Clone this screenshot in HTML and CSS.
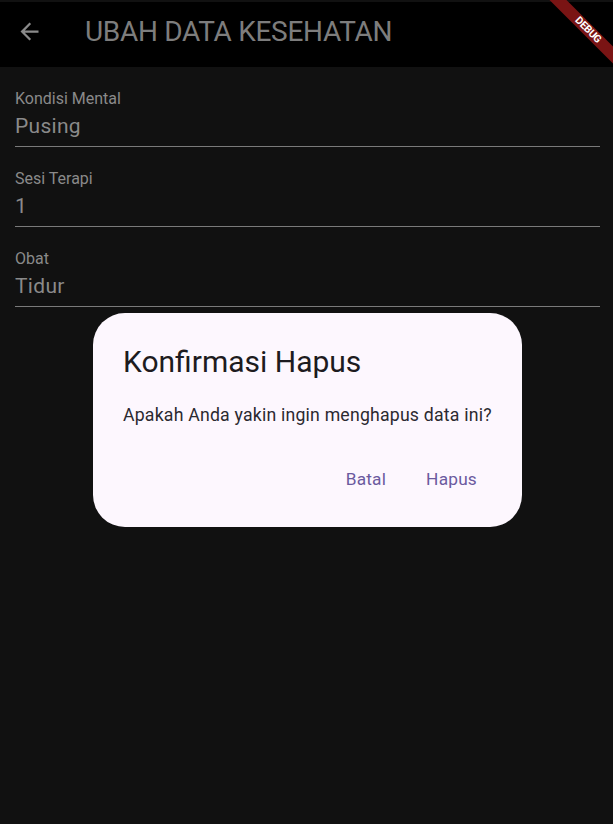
FILE: index.html
```html
<!DOCTYPE html>
<html>
<head>
<meta charset="utf-8">
<link rel="stylesheet" href="styles.css">
</head>
<body>
<div class="app">
  <header class="appbar">
    <svg class="back" viewBox="0 0 24 24" width="27" height="27"><path d="M20 11H7.83l5.59-5.59L12 4l-8 8 8 8 1.41-1.41L7.83 13H20v-2z" fill="currentColor"/></svg>
    <h1 class="title">UBAH DATA KESEHATAN</h1>
  </header>
  <main class="form">
    <div class="field"><div class="label">Kondisi Mental</div><div class="value">Pusing</div></div>
    <div class="field"><div class="label">Sesi Terapi</div><div class="value">1</div></div>
    <div class="field"><div class="label">Obat</div><div class="value">Tidur</div></div>
  </main>
  <div class="dialog">
    <h2 class="dlg-title">Konfirmasi Hapus</h2>
    <p class="dlg-content">Apakah Anda yakin ingin menghapus data ini?</p>
    <div class="actions">
      <button class="btn">Batal</button>
      <button class="btn">Hapus</button>
    </div>
  </div>
  <div class="banner"><span>DEBUG</span></div>
</div>
</body>
</html>
```
FILE: styles.css
```css
* { box-sizing: border-box; }
html, body { margin: 0; padding: 0; }
body {
  background: #111111;
  font-family: Roboto, "Noto Sans", sans-serif;
  width: 613px;
  height: 824px;
  overflow: hidden;
}
.app {
  position: relative;
  width: 613px;
  height: 824px;
  background: #111111;
  overflow: hidden;
}
.appbar {
  margin-top: 2px;
  height: 65px;
  background: #000;
  display: flex;
  align-items: center;
  padding-left: 16px;
  padding-bottom: 6px;
}
.back { color: #8a8a8a; display: block; }
.title {
  margin: 0 0 0 42px;
  font-weight: 400;
  font-size: 28px;
  letter-spacing: -0.3px;
  color: #7d7d7d;
}
.form {
  padding: 0 13px 0 15px;
  display: flex;
  flex-direction: column;
}
.field {
  height: 80px;
  padding-top: 22px;
  border-bottom: 1.5px solid #7a7a7a;
}
.label {
  font-size: 16px;
  line-height: 19px;
  color: #8a8a8a;
}
.value {
  margin-top: 3px;
  font-size: 21px;
  line-height: 30px;
  color: #8a8a8a;
  letter-spacing: 0.3px;
}
.dialog {
  position: absolute;
  left: 93px;
  top: 313px;
  width: 429px;
  height: 214px;
  background: #fdf7fe;
  border-radius: 32px;
  padding: 28px 20px 0 30px;
}
.dlg-title {
  margin: 0;
  font-weight: 400;
  font-size: 30px;
  line-height: 42px;
  color: #1d1b20;
}
.dlg-content {
  margin: 20px 0 0 0;
  font-size: 17.7px;
  line-height: 24px;
  color: #2b2930;
  letter-spacing: 0.2px;
  white-space: nowrap;
}
.actions {
  display: flex;
  justify-content: flex-end;
  gap: 8px;
  margin-top: 33px;
  margin-right: 25px;
}
.btn {
  border: 0;
  background: transparent;
  font-family: Roboto, sans-serif;
  font-size: 17.3px;
  line-height: 22px;
  color: #6b5a9f;
  padding: 8px 16px;
  letter-spacing: 0.2px;
}
.btn:last-child { padding-right: 0; }
.banner {
  position: absolute;
  top: 24px;
  right: -35px;
  width: 120px;
  height: 12px;
  background: #7a1414;
  transform: rotate(45deg);
  display: flex;
  align-items: center;
  justify-content: center;
}
.banner span {
  color: #fff;
  font-weight: 700;
  font-size: 10.5px;
  line-height: 12px;
  letter-spacing: -0.3px;
}
```
